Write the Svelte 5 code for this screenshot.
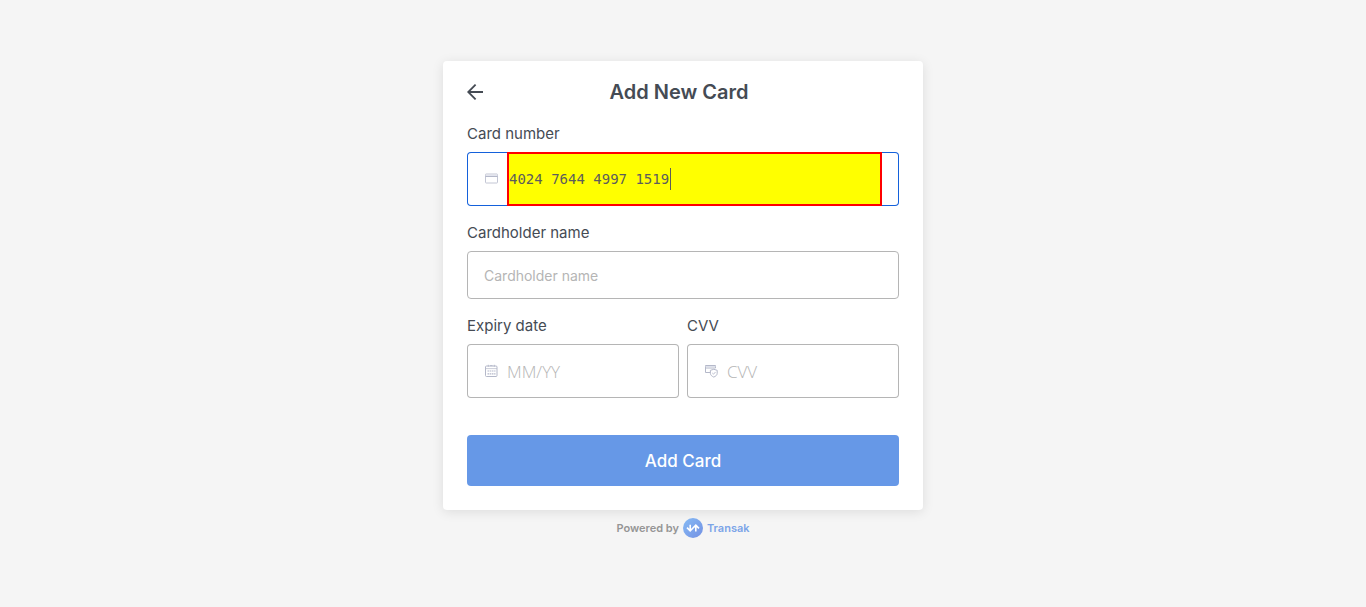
<script>
  import { onMount } from 'svelte';

  let number = $state('4024 7644 4997 1519');
  let holder = $state('');
  let expiry = $state('');
  let cvv = $state('');
  let numberInput;

  onMount(() => {
    numberInput.focus();
    numberInput.setSelectionRange(number.length, number.length);
  });
</script>

<main>
  <form class="card" onsubmit={(e) => e.preventDefault()}>
    <header>
      <button type="button" class="back" aria-label="Back">
        <svg viewBox="0 0 16 16" width="16" height="16" fill="none" stroke="currentColor" stroke-width="1.8">
          <path d="M16 8H1.4M8.6 .6 1.2 8l7.4 7.4" />
        </svg>
      </button>
      <h1>Add New Card</h1>
    </header>

    <div class="field">
      <label for="number">Card number</label>
      <div class="box focused">
        <svg class="icon" viewBox="0 0 14 14" width="14" height="14" fill="none" stroke="#b4b8c9">
          <rect x="1.5" y="2" width="12" height="9" rx=".6" stroke="#c3c6d4" />
          <path d="M1.5 4.5h12" />
          <path d="M1.5 3.3h12" stroke="#dcdfea" />
        </svg>
        <div class="entry">
          <input id="number" class="number" inputmode="numeric" bind:value={number} bind:this={numberInput} />
          <span class="caret" style="left: {number.length}ch"></span>
        </div>
      </div>
    </div>

    <div class="field">
      <label for="holder">Cardholder name</label>
      <input id="holder" class="holder" placeholder="Cardholder name" bind:value={holder} />
    </div>

    <div class="pair">
      <div class="field">
        <label for="expiry">Expiry date</label>
        <div class="box">
          <svg class="icon" viewBox="0 0 14 14" width="14" height="14" fill="none" stroke="#b4b8c9">
            <rect x="1.5" y="2" width="11.5" height="10.5" rx="1" />
            <path d="M1.5 4.6H13" stroke-width=".7" />
            <path d="M4.3 .8v2M10.3 .8v2M6.1 1.6h2.4" stroke-width=".9" />
            <path d="M3.5 7h8M3.5 9.8h8" stroke-dasharray="1.6 .6" stroke-width="1.2" />
          </svg>
          <input id="expiry" class="thin" placeholder="MM/YY" bind:value={expiry} />
        </div>
      </div>
      <div class="field">
        <label for="cvv">CVV</label>
        <div class="box">
          <svg class="icon" viewBox="0 0 14 14" width="14" height="14" fill="none" stroke="#b4b8c9">
            <path d="M6 8.5H1.5v-7h10V4M1 4h10.5" />
            <path d="M1.5 2.6h10" stroke="#dcdfea" />
            <path d="M9.8 5.3l3.4 1v3c0 1.8-1.4 2.9-3.4 3.8-2-.9-3.4-2-3.4-3.8v-3z" fill="#fff" />
            <path d="M8.3 9l1.2 1.2 2-2.2" stroke-width=".9" />
          </svg>
          <input id="cvv" class="thin" placeholder="CVV" bind:value={cvv} />
        </div>
      </div>
    </div>

    <button class="submit">Add Card</button>
  </form>

  <footer>
    <span>Powered by</span>
    <svg viewBox="0 0 20 20" width="20" height="20" fill="none" stroke="#fff" stroke-width="1.6">
      <defs>
        <linearGradient id="disc" x1="0" y1="0" x2="1" y2="1">
          <stop offset="0" stop-color="#86bbf5" />
          <stop offset="1" stop-color="#7390e3" />
        </linearGradient>
      </defs>
      <circle cx="10" cy="10" r="10" fill="url(#disc)" stroke="none" />
      <path d="M4 9.6l3.2 3.2L10 10M7.2 6.8v5.6M10 10l2.8-2.8L16 10.4M12.8 7.8v5.6" />
    </svg>
    <a href="#transak">Transak</a>
  </footer>
</main>

<style>
  :global(body) {
    margin: 0;
    background: #f5f5f5;
  }
  main {
    display: flex;
    flex-direction: column;
    align-items: center;
    padding: 61px 16px;
    font-family: Inter, 'Open Sans', sans-serif;
    color: #454b54;
  }
  .card,
  input,
  button {
    box-sizing: border-box;
    font-family: inherit;
  }
  .card {
    display: flex;
    flex-direction: column;
    gap: 17px;
    width: 100%;
    max-width: 480px;
    padding: 16px 24px 24px;
    background: #fff;
    border-radius: 4px;
    box-shadow: 0 2px 12px rgba(0, 0, 0, 0.1);
  }
  header {
    display: flex;
    align-items: center;
    padding-right: 24px;
  }
  .back {
    display: flex;
    padding: 0;
    border: 0;
    background: none;
    color: #454b54;
  }
  h1 {
    flex: 1;
    margin: 0;
    font-size: 20px;
    line-height: 30px;
    font-weight: 600;
    text-align: center;
  }
  .field {
    display: flex;
    flex: 1;
    flex-direction: column;
    gap: 8px;
    min-width: 0;
  }
  label {
    font-size: 15px;
    line-height: 20px;
  }
  .box {
    display: flex;
    align-items: center;
    height: 54px;
    padding: 0 17px 0 16px;
    border-radius: 4px;
    box-shadow: inset 0 0 0 1px #b5b5b5;
  }
  .focused {
    box-shadow: inset 0 0 0 1px #1461db;
  }
  .icon {
    flex: none;
    margin-right: 9px;
    padding-left: 1px;
  }
  input {
    flex: 1;
    min-width: 0;
    height: 100%;
    padding: 0;
    border: 0;
    outline: 0;
    background: none;
    color: #5c5c5c;
  }
  .entry {
    position: relative;
    display: flex;
    flex: 1;
    height: 100%;
    min-width: 0;
    font-family: 'DejaVu Sans Mono', monospace;
    font-size: 14px;
  }
  .number {
    border: 2px solid #f00;
    background: #ff0;
    font-size: inherit;
    caret-color: transparent;
  }
  .caret {
    position: absolute;
    top: 16px;
    width: 1px;
    height: 22px;
    margin-left: 3px;
    background: #5c5c5c;
  }
  .holder {
    flex: none;
    height: 48px;
    padding: 0 16px;
    border: 1px solid #b5b5b5;
    border-radius: 4px;
    font-size: 14px;
  }
  .thin {
    font-family: 'Open Sans', sans-serif;
    font-size: 17px;
    font-weight: 300;
  }
  input::placeholder {
    color: #b5b5b5;
  }
  .pair {
    display: flex;
    gap: 8px;
  }
  .submit {
    height: 51px;
    margin-top: 20px;
    border: 0;
    border-radius: 4px;
    background: #6698e7;
    color: #fff;
    font-size: 17px;
    font-weight: 500;
  }
  footer {
    display: flex;
    align-items: center;
    gap: 4px;
    padding-top: 8px;
    font-size: 11px;
    font-weight: 600;
    color: #969696;
  }
  footer a {
    color: #7ba4e8;
    text-decoration: none;
  }
</style>
